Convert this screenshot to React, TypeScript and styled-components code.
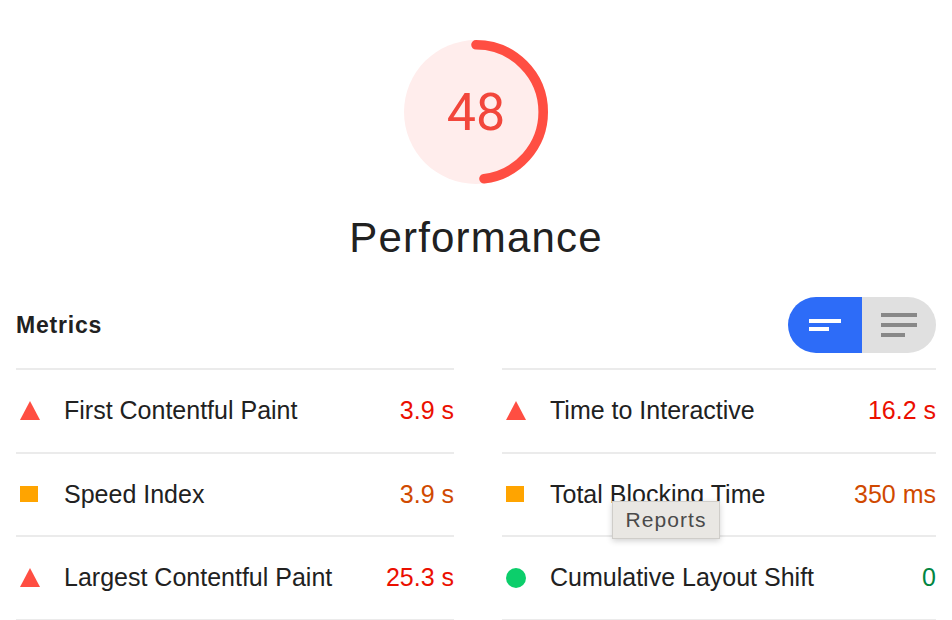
import React from "react";
import styled, { createGlobalStyle } from "styled-components";

const GlobalStyle = createGlobalStyle`
  html, body { margin: 0; padding: 0; background: #ffffff; }
  body { font-family: "Liberation Sans", Arial, sans-serif; color: #212121; }
`;

const Page = styled.div`
  width: 952px;
  height: 620px;
  overflow: hidden;
  padding: 40px 16px 0;
  box-sizing: border-box;
  display: flex;
  flex-direction: column;
  align-items: center;
  & > * { flex-shrink: 0; }
`;

const GaugeSvg = styled.svg`
  width: 144px;
  height: 144px;
  display: block;
`;

const GaugeText = styled.text`
  font-family: Roboto, "Liberation Sans", sans-serif;
  font-size: 52px;
  fill: #f2463b;
`;

const Title = styled.div`
  margin-top: 33px;
  font-size: 42px;
  line-height: 42px;
  color: #212121;
  letter-spacing: 1.2px;
`;

const Header = styled.div`
  align-self: stretch;
  margin-top: 38px;
  display: flex;
  align-items: center;
  justify-content: space-between;
`;

const HeaderTitle = styled.div`
  font-size: 23px;
  font-weight: 700;
  letter-spacing: 0.8px;
  color: #212121;
`;

const Toggle = styled.div`
  display: flex;
  width: 148px;
  height: 56px;
  border-radius: 28px;
  overflow: hidden;
`;

const ToggleHalf = styled.div<{ $active: boolean }>`
  flex: 1;
  display: flex;
  align-items: center;
  justify-content: center;
  background: ${(p) => (p.$active ? "#2d6cf8" : "#e0e0e0")};
`;

const Grid = styled.div`
  align-self: stretch;
  margin-top: 15px;
  display: grid;
  grid-template-columns: 438px 434px;
  column-gap: 48px;
`;

const Column = styled.div`
  border-top: 2px solid #ebebeb;
`;

const Row = styled.div`
  position: relative;
  height: 81.5px;
  border-bottom: 2px solid #ebebeb;
  display: flex;
  align-items: center;
  font-size: 25px;
`;

const IconBox = styled.div`
  width: 48px;
  display: flex;
  align-items: center;
  padding-left: 4px;
  box-sizing: border-box;
`;

const Square = styled.div`
  width: 18px;
  height: 16px;
  background: #ffa400;
`;

const Dot = styled.div`
  width: 20px;
  height: 20px;
  border-radius: 50%;
  background: #0cce6b;
`;

const Label = styled.div`
  flex: 1;
  color: #212121;
`;

type Status = "fail" | "average" | "pass";

const valueColors: Record<Status, string> = {
  fail: "#eb0f00",
  average: "#d04900",
  pass: "#018642",
};

const Value = styled.div<{ $status: Status }>`
  color: ${(p) => valueColors[p.$status]};
`;

const Tooltip = styled.div`
  position: absolute;
  left: 110px;
  top: 47px;
  width: 108px;
  height: 38px;
  box-sizing: border-box;
  background: #e9e7e3;
  border: 1px solid #cfcdc9;
  box-shadow: 0 2px 6px rgba(0, 0, 0, 0.18);
  display: flex;
  align-items: center;
  justify-content: center;
  font-family: "Liberation Sans", Arial, sans-serif;
  font-size: 21px;
  letter-spacing: 1.1px;
  color: #4a4a4a;
  z-index: 2;
`;

const Triangle = () => (
  <svg width="20" height="19" viewBox="0 0 20 19">
    <polygon points="10,0 20,19 0,19" fill="#ff4e42" />
  </svg>
);

const StatusIcon = ({ status }: { status: Status }) => (
  <IconBox>
    {status === "fail" ? <Triangle /> : status === "average" ? <Square /> : <Dot />}
  </IconBox>
);

type Metric = { label: string; value: string; status: Status; tooltip?: boolean };

const left: Metric[] = [
  { label: "First Contentful Paint", value: "3.9 s", status: "fail" },
  { label: "Speed Index", value: "3.9 s", status: "average" },
  { label: "Largest Contentful Paint", value: "25.3 s", status: "fail" },
];

const right: Metric[] = [
  { label: "Time to Interactive", value: "16.2 s", status: "fail" },
  { label: "Total Blocking Time", value: "350 ms", status: "average", tooltip: true },
  { label: "Cumulative Layout Shift", value: "0", status: "pass" },
];

const Gauge = ({ score }: { score: number }) => {
  const r = 67.2;
  const c = 2 * Math.PI * r;
  return (
    <GaugeSvg viewBox="0 0 144 144">
      <circle cx="72" cy="72" r="72" fill="#ffedec" />
      <circle
        cx="72"
        cy="72"
        r={r}
        fill="none"
        stroke="#ff4e42"
        strokeWidth="9.6"
        strokeLinecap="round"
        strokeDasharray={`${(score / 100) * c} ${c}`}
        transform="rotate(-90 72 72)"
      />
      <GaugeText x="72" y="72" textAnchor="middle" dominantBaseline="central">
        {score}
      </GaugeText>
    </GaugeSvg>
  );
};

const SortIcon = () => (
  <svg width="32" height="12" viewBox="0 0 32 12">
    <rect x="0" y="0" width="32" height="4" fill="#ffffff" />
    <rect x="0" y="8" width="20" height="4" fill="#ffffff" />
  </svg>
);

const ListIcon = () => (
  <svg width="36" height="24" viewBox="0 0 36 24">
    <rect x="0" y="0" width="36" height="4" fill="#888888" />
    <rect x="0" y="10" width="36" height="4" fill="#888888" />
    <rect x="0" y="20" width="24" height="4" fill="#888888" />
  </svg>
);

const MetricColumn = ({ items }: { items: Metric[] }) => (
  <Column>
    {items.map((m) => (
      <Row key={m.label}>
        <StatusIcon status={m.status} />
        <Label>{m.label}</Label>
        <Value $status={m.status}>{m.value}</Value>
        {m.tooltip && <Tooltip>Reports</Tooltip>}
      </Row>
    ))}
  </Column>
);

export default function App() {
  return (
    <>
      <GlobalStyle />
      <Page>
        <Gauge score={48} />
        <Title>Performance</Title>
        <Header>
          <HeaderTitle>Metrics</HeaderTitle>
          <Toggle>
            <ToggleHalf $active>
              <SortIcon />
            </ToggleHalf>
            <ToggleHalf $active={false}>
              <ListIcon />
            </ToggleHalf>
          </Toggle>
        </Header>
        <Grid>
          <MetricColumn items={left} />
          <MetricColumn items={right} />
        </Grid>
      </Page>
    </>
  );
}
